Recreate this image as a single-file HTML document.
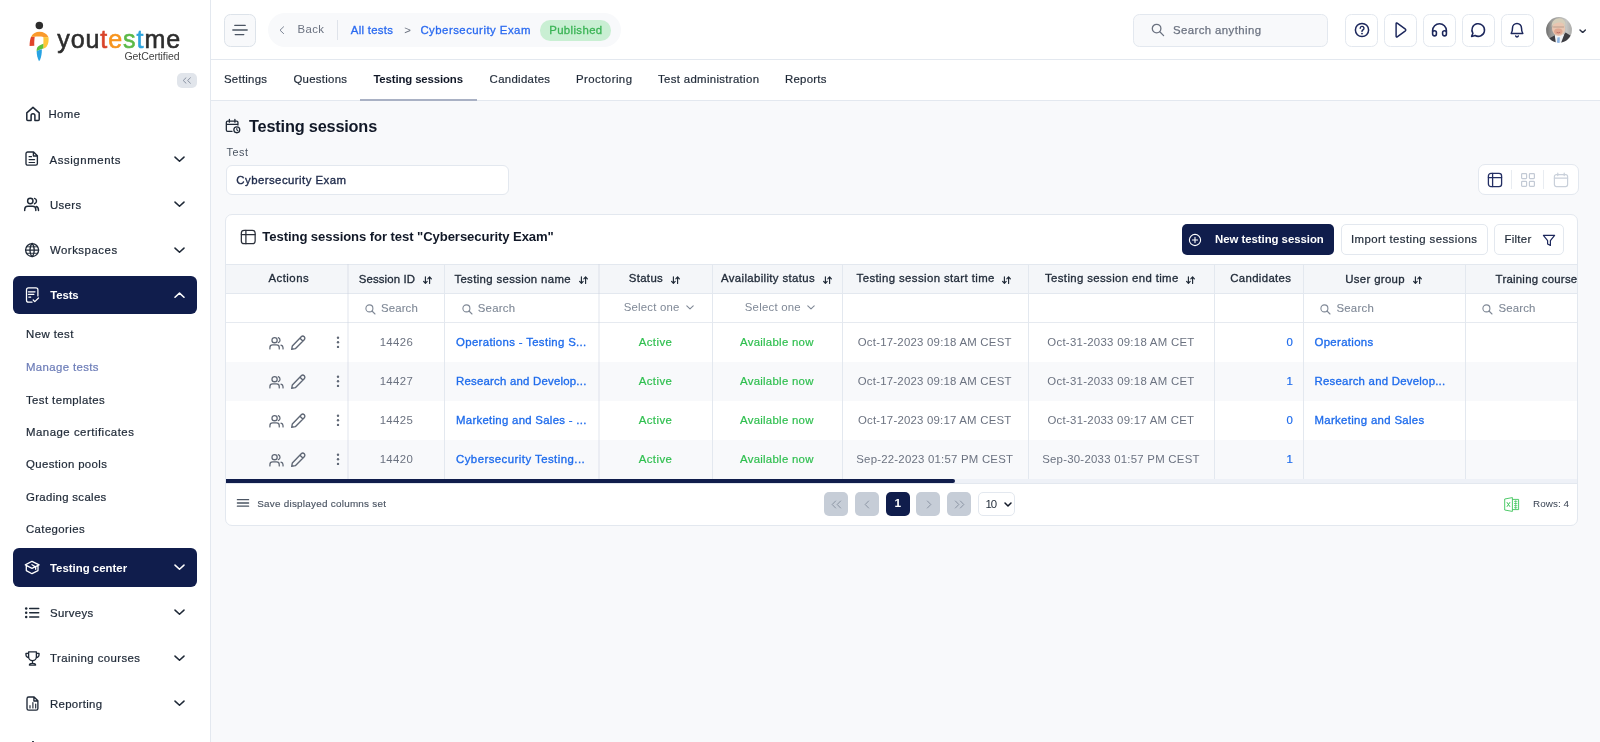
<!DOCTYPE html><html><head><meta charset="utf-8"><title>Testing sessions</title><style>
html,body{margin:0;padding:0}body{width:1600px;height:742px;overflow:hidden;position:relative;background:#f8f9fb;font-family:"Liberation Sans",sans-serif;}
.b{position:absolute;box-sizing:border-box}.t{position:absolute;white-space:nowrap;line-height:1;font-family:"Liberation Sans",sans-serif;}
</style></head><body>
<div class="b" style="left:0px;top:0px;width:211px;height:742px;background:#ffffff;border-right:1px solid #e3e8ef;"></div>
<div class="b" style="left:211px;top:0px;width:1389px;height:60px;background:#ffffff;border-bottom:1px solid #e3e8ef;"></div>
<div class="b" style="left:211px;top:60px;width:1389px;height:41px;background:#ffffff;border-bottom:1px solid #e3e8ef;"></div>
<svg class="b" style="left:26px;top:18px" width="26" height="46" viewBox="26 18 26 46">
<circle cx="39.3" cy="25.4" r="3.75" fill="#2d2d2d"/>
<path d="M31.0 36.9 L34.7 36.7 C34.3 39.5 34.2 43 34.3 45.7 L29.6 46.1 C29.6 42.5 30.0 39.6 31.0 36.9 Z" fill="#e0452b"/>
<path d="M31.0 37.0 C32.8 33.4 36 31.8 39.4 31.8 C43.6 31.8 46.9 33.7 48.5 37.3 L43.4 37.0 C41 36.4 37 36.4 34.6 36.8 Z" fill="#fa9a2c"/>
<path d="M43.3 37.0 L48.5 37.2 C48.9 40.5 48.5 44 46.7 46.4 C45.5 47.8 44 48.4 43.2 48.5 L43.3 44.0 C43.5 41 43.5 39 43.3 37.0 Z" fill="#fdc63a"/>
<path d="M43.35 43.8 L43.3 48.5 C41 49.2 38.5 50 36.7 51.3 C36.4 48.5 37.2 46.6 39.5 45.4 C41 44.7 42.2 44.3 43.35 43.8 Z" fill="#5cc03c"/>
<path d="M36.7 51.1 C38.5 50 40.4 49.5 41.9 49.2 C41.9 53 41.3 57 40.1 59.8 L39 61.2 C37.4 58 36.6 54.6 36.7 51.1 Z" fill="#27a3e3"/>
</svg>
<div class="b" style="left:177px;top:73px;width:20px;height:15px;background:#e1e5eb;border-radius:5px;"></div>
<svg class="b" style="left:181.6px;top:77.2px;" width="10" height="7" viewBox="0 0 10 7" fill="none" stroke="#8a93a3" stroke-width="1.0" stroke-linecap="round" stroke-linejoin="round"><path d="M4 0.8 L1.2 3.5 L4 6.2 M8.4 0.8 L5.6 3.5 L8.4 6.2"/></svg>
<svg class="b" style="left:25px;top:106px;" width="16" height="16" viewBox="0 0 16 16" fill="none" stroke="#1f2937" stroke-width="1.5" stroke-linecap="round" stroke-linejoin="round"><path d="M6.1 14.6 V9.6 a1.9 1.9 0 0 1 3.8 0 V14.6 H13.2 a1 1 0 0 0 1 -1 V6.9 L8 1.4 L1.8 6.9 V13.6 a1 1 0 0 0 1 1 Z"/></svg>
<svg class="b" style="left:25.3px;top:151.2px" width="13.4" height="15.2" viewBox="25.3 151.2 13.4 15.2" fill="none" stroke="#1f2937" stroke-width="1.35" stroke-linecap="round" stroke-linejoin="round"><path d="M28.0 152.2 H33.900000000000006 L37.7 156.0 V163.70000000000002 a1.7 1.7 0 0 1 -1.7 1.7 H28.0 a1.7 1.7 0 0 1 -1.7 -1.7 V153.89999999999998 a1.7 1.7 0 0 1 1.7 -1.7 Z M33.7 152.39999999999998 V156.2 H37.5"/><path d="M29.4 156.9 H31.8 M29.4 159.8 H34.9 M29.4 162.7 H34.9" stroke-width="1.2"/></svg>
<svg class="b" style="left:173.5px;top:155.5px;" width="11" height="6.4" viewBox="0 0 11 6.2" fill="none" stroke="#1f2937" stroke-width="1.5" stroke-linecap="round" stroke-linejoin="round"><path d="M1 1 L5.5 5.2 L10 1"/></svg>
<svg class="b" style="left:23px;top:196px" width="18" height="17" viewBox="23 196 18 17" fill="none" stroke="#1f2937" stroke-width="1.45" stroke-linecap="round" stroke-linejoin="round"><circle cx="30.3" cy="200.95" r="2.7"/><path d="M24.7 210.4 V209.4 a3.2 3.2 0 0 1 3.2 -3.2 H32.6 a3.2 3.2 0 0 1 3.2 3.2 V210.4 M34.5 198.4 a2.75 2.75 0 0 1 0 5.3 M36.3 206.5 C37.8 207 38.5 208.4 38.5 210.4"/></svg>
<svg class="b" style="left:173.5px;top:201px;" width="11" height="6.4" viewBox="0 0 11 6.2" fill="none" stroke="#1f2937" stroke-width="1.5" stroke-linecap="round" stroke-linejoin="round"><path d="M1 1 L5.5 5.2 L10 1"/></svg>
<svg class="b" style="left:23px;top:241px" width="18" height="18" viewBox="23 241 18 18" fill="none" stroke="#1f2937" stroke-width="1.3" stroke-linecap="round" stroke-linejoin="round"><circle cx="32.1" cy="250.05" r="6.5"/><path d="M25.6 250.05 H38.6 M32.1 243.55 C29.2 246.3 29.2 253.8 32.1 256.55 M32.1 243.55 C35 246.3 35 253.8 32.1 256.55"/><path d="M26.6 246.8 H37.6 M26.6 253.3 H37.6" stroke-width="0.9"/></svg>
<svg class="b" style="left:173.5px;top:246.5px;" width="11" height="6.4" viewBox="0 0 11 6.2" fill="none" stroke="#1f2937" stroke-width="1.5" stroke-linecap="round" stroke-linejoin="round"><path d="M1 1 L5.5 5.2 L10 1"/></svg>
<div class="b" style="left:13px;top:276px;width:184px;height:38px;background:#101d4c;border-radius:6px;"></div>
<svg class="b" style="left:24px;top:285px" width="17" height="20" viewBox="24 285 17 20" fill="none" stroke="#ffffff" stroke-width="1.25" stroke-linecap="round" stroke-linejoin="round"><path d="M37.9 295.9 V289.8 a2 2 0 0 0 -2 -2 H28.5 a2 2 0 0 0 -2 2 V300.2 a2 2 0 0 0 2 2 H32 M28.4 291.8 H35 M28.4 294.3 H33.9 M28.8 297 H30.7 M33.2 300 L34.8 301.6 L38.5 298"/></svg>
<svg class="b" style="left:173.5px;top:291.5px;" width="11" height="6.4" viewBox="0 0 11 6.2" fill="none" stroke="#ffffff" stroke-width="1.5" stroke-linecap="round" stroke-linejoin="round"><path d="M1 5.2 L5.5 1 L10 5.2"/></svg>
<div class="b" style="left:13px;top:548px;width:184px;height:39px;background:#101d4c;border-radius:6px;"></div>
<svg class="b" style="left:23px;top:559px" width="18" height="17" viewBox="23 559 18 17" fill="none" stroke="#ffffff" stroke-width="1.3" stroke-linecap="round" stroke-linejoin="round"><path d="M25.3 564.9 L32 561.3 L39.1 564.9 L32 568.3 Z M26.3 565.8 V570.6 L32 573.7 L38 570.6 V565.8 M32 564.7 L35.7 567 V569.3"/></svg>
<svg class="b" style="left:173.5px;top:564.3px;" width="11" height="6.4" viewBox="0 0 11 6.2" fill="none" stroke="#ffffff" stroke-width="1.5" stroke-linecap="round" stroke-linejoin="round"><path d="M1 1 L5.5 5.2 L10 1"/></svg>
<svg class="b" style="left:23px;top:605px" width="18" height="16" viewBox="23 605 18 16" fill="none" stroke="#1f2937" stroke-width="1.4" stroke-linecap="round" stroke-linejoin="round"><path d="M29.7 608.5 H38.7 M29.7 612.7 H38.7 M29.7 616.9 H38.7" stroke-width="1.5"/><circle cx="26.2" cy="608.5" r="1.25" fill="#1f2937" stroke="none"/><circle cx="26.2" cy="612.7" r="1.25" fill="#1f2937" stroke="none"/><circle cx="26.2" cy="616.9" r="1.25" fill="#1f2937" stroke="none"/></svg>
<svg class="b" style="left:173.5px;top:609.3px;" width="11" height="6.4" viewBox="0 0 11 6.2" fill="none" stroke="#1f2937" stroke-width="1.5" stroke-linecap="round" stroke-linejoin="round"><path d="M1 1 L5.5 5.2 L10 1"/></svg>
<svg class="b" style="left:23.9px;top:649.6px;" width="17" height="17" viewBox="0 0 17 16" fill="none" stroke="#1f2937" stroke-width="1.35" stroke-linecap="round" stroke-linejoin="round"><path d="M4.6 1.4 H12.4 V6.2 a3.9 3.9 0 0 1 -7.8 0 Z M4.6 2.8 H2 V4.4 a2.6 2.6 0 0 0 2.8 2.6 M12.4 2.8 H15 V4.4 a2.6 2.6 0 0 1 -2.8 2.6 M8.5 10.2 V12.4 M5.4 14.6 C5.4 12.2 11.6 12.2 11.6 14.6 Z"/></svg>
<svg class="b" style="left:173.5px;top:654.6px;" width="11" height="6.4" viewBox="0 0 11 6.2" fill="none" stroke="#1f2937" stroke-width="1.5" stroke-linecap="round" stroke-linejoin="round"><path d="M1 1 L5.5 5.2 L10 1"/></svg>
<svg class="b" style="left:25.7px;top:695.7px" width="12.9" height="15.2" viewBox="25.7 695.7 12.9 15.2" fill="none" stroke="#1f2937" stroke-width="1.35" stroke-linecap="round" stroke-linejoin="round"><path d="M28.4 696.7 H33.800000000000004 L37.6 700.5 V708.1999999999999 a1.7 1.7 0 0 1 -1.7 1.7 H28.4 a1.7 1.7 0 0 1 -1.7 -1.7 V698.4000000000001 a1.7 1.7 0 0 1 1.7 -1.7 Z M33.6 696.9000000000001 V700.7 H37.4"/><path d="M29.7 707.6 V705.4 M32.6 707.6 V702.3 M35.4 707.6 V703.7" stroke-width="1.15"/></svg>
<svg class="b" style="left:173.5px;top:699.8px;" width="11" height="6.4" viewBox="0 0 11 6.2" fill="none" stroke="#1f2937" stroke-width="1.5" stroke-linecap="round" stroke-linejoin="round"><path d="M1 1 L5.5 5.2 L10 1"/></svg>
<div class="b" style="left:32px;top:740.6px;width:2.2px;height:1.4px;background:#1f2937;border-radius:1px;"></div>
<div class="b" style="left:223.8px;top:14px;width:32.6px;height:32.6px;background:#f8f9fb;border:1px solid #dde3ea;border-radius:6.5px;"></div>
<svg class="b" style="left:232px;top:22px;" width="16" height="16" viewBox="0 0 16 16" fill="none" stroke="#4b5563" stroke-width="1.3" stroke-linecap="round" stroke-linejoin="round"><path d="M2.8 3.4 H13.2 M0.8 8 H15.2 M3.2 12.6 H11.8"/></svg>
<div class="b" style="left:268px;top:13px;width:353px;height:34px;background:#f8f9fb;border-radius:17px;"></div>
<svg class="b" style="left:279px;top:26px;" width="6" height="8.4" viewBox="0 0 6 8.4" fill="none" stroke="#7b8494" stroke-width="1.0" stroke-linecap="round" stroke-linejoin="round"><path d="M4.6 0.8 L1 4.2 L4.6 7.6"/></svg>
<div class="b" style="left:337px;top:20px;width:1px;height:20px;background:#dfe3ea;"></div>
<div class="b" style="left:540px;top:20px;width:71px;height:20.5px;background:#c9efd3;border-radius:10.3px;"></div>
<div class="b" style="left:1133px;top:14px;width:195px;height:32.6px;background:#f8f9fb;border:1px solid #e3e8ef;border-radius:6.5px;"></div>
<svg class="b" style="left:1151px;top:22.7px;" width="14" height="14" viewBox="0 0 14 14" fill="none" stroke="#6b7280" stroke-width="1.3" stroke-linecap="round" stroke-linejoin="round"><circle cx="5.6" cy="5.6" r="4.3"/><path d="M8.8 8.8 L12.6 12.6"/></svg>
<div class="b" style="left:1345.3px;top:14px;width:32.6px;height:32.6px;background:#ffffff;border:1px solid #e3e8ef;border-radius:6.5px;"></div>
<div class="b" style="left:1384.3px;top:14px;width:32.6px;height:32.6px;background:#ffffff;border:1px solid #e3e8ef;border-radius:6.5px;"></div>
<div class="b" style="left:1423.3px;top:14px;width:32.6px;height:32.6px;background:#ffffff;border:1px solid #e3e8ef;border-radius:6.5px;"></div>
<div class="b" style="left:1462.3px;top:14px;width:32.6px;height:32.6px;background:#ffffff;border:1px solid #e3e8ef;border-radius:6.5px;"></div>
<div class="b" style="left:1501.3px;top:14px;width:32.6px;height:32.6px;background:#ffffff;border:1px solid #e3e8ef;border-radius:6.5px;"></div>
<svg class="b" style="left:1353.9px;top:22px;" width="16" height="16" viewBox="0 0 16 16" fill="none" stroke="#1c275c" stroke-width="1.5" stroke-linecap="round" stroke-linejoin="round"><circle cx="8" cy="8" r="6.6"/><path d="M6.2 6.2 a1.9 1.9 0 1 1 2.7 1.8 c-0.6 0.3 -0.9 0.7 -0.9 1.4" stroke-width="1.4"/><circle cx="8" cy="11.6" r="0.9" fill="#1c275c" stroke="none"/></svg>
<svg class="b" style="left:1392.2px;top:22px;" width="16" height="16" viewBox="0 0 16 16" fill="none" stroke="#1c275c" stroke-width="1.45" stroke-linecap="round" stroke-linejoin="round"><path d="M4.1 1.7 C4.1 1 4.7 0.8 5.2 1.1 L13.4 7.2 C13.9 7.6 13.9 8.4 13.4 8.8 L5.2 14.9 C4.7 15.2 4.1 15 4.1 14.3 Z"/></svg>
<svg class="b" style="left:1431px;top:21.8px;" width="17" height="16" viewBox="0 0 17 16" fill="none" stroke="#1c275c" stroke-width="1.6" stroke-linecap="round" stroke-linejoin="round"><path d="M1.6 11.4 V8.6 a6.9 6.9 0 0 1 13.8 0 V11.4 M1.6 12 a1.9 1.9 0 0 0 3.8 0 V10.6 a1.9 1.9 0 0 0 -3.8 0 Z M11.6 12 a1.9 1.9 0 0 0 3.8 0 V10.6 a1.9 1.9 0 0 0 -3.8 0 Z"/></svg>
<svg class="b" style="left:1470.3px;top:22px;" width="16" height="16" viewBox="0 0 16 16" fill="none" stroke="#1c275c" stroke-width="1.5" stroke-linecap="round" stroke-linejoin="round"><path d="M2.9 11.4 A6.3 6.3 0 1 1 5.1 13.5 L1.6 14.4 Z"/></svg>
<svg class="b" style="left:1509.4px;top:21px;" width="16" height="18" viewBox="0 0 16 18" fill="none" stroke="#1c275c" stroke-width="1.5" stroke-linecap="round" stroke-linejoin="round"><path d="M2.2 12.4 H13.8 C12.5 10.8 12.5 9.4 12.5 7 a4.5 4.5 0 0 0 -9 0 C3.5 9.4 3.5 10.8 2.2 12.4 Z M6.7 15 a1.4 1.4 0 0 0 2.6 0"/></svg>
<svg class="b" style="left:1546.4px;top:17.2px" width="26" height="26" viewBox="0 0 26 26">
<defs><clipPath id="av"><circle cx="13" cy="13" r="12.9"/></clipPath>
<linearGradient id="avbg" x1="0" y1="0" x2="1" y2="0"><stop offset="0" stop-color="#5e5e5e"/><stop offset="0.25" stop-color="#9a9a98"/><stop offset="0.75" stop-color="#c6c6c4"/><stop offset="1" stop-color="#a2a2a0"/></linearGradient>
<filter id="avbl" x="-10%" y="-10%" width="120%" height="120%"><feGaussianBlur stdDeviation="0.6"/></filter></defs>
<g clip-path="url(#av)"><g filter="url(#avbl)">
<rect x="-2" y="-2" width="30" height="30" fill="url(#avbg)"/>
<path d="M1 22.5 L9 18.2 L13 25 L17.5 18.5 L19.6 15.4 L26 19.5 L26 28 L1 28 Z" fill="#3c3d43"/>
<path d="M8.8 18.4 L12 16.6 L16.4 17.2 L18.2 17.6 L14.6 27 L10 27 Z" fill="#f1f3f6"/>
<path d="M11.4 20.4 L13.8 20.2 L13.6 27 L10.8 27 Z" fill="#8db4e2"/>
<ellipse cx="12.6" cy="11.4" rx="6.6" ry="7.6" fill="#e9c6b1"/>
<ellipse cx="12.3" cy="14.6" rx="4.2" ry="3" fill="#e0a791"/>
<path d="M5.8 10 C5 3.6 9.8 0.9 13.8 1.2 C18.2 1.5 20.4 5.4 19.2 10 C18.4 6.4 16 5.2 12.8 5.6 C9.6 6 7 7.2 5.8 10 Z" fill="#d6cfbb"/>
<path d="M7.2 10 H18" stroke="#9a8476" stroke-width="0.6" fill="none"/>
<path d="M10.6 15.3 Q12.4 16.3 14.2 15.3" stroke="#b5605a" stroke-width="0.7" fill="none"/>
</g></g></svg>
<svg class="b" style="left:1579.1px;top:28.5px;" width="7.4" height="4.8" viewBox="0 0 7.4 4.8" fill="none" stroke="#2b3245" stroke-width="1.4" stroke-linecap="round" stroke-linejoin="round"><path d="M1 1 L3.7 3.6 L6.4 1"/></svg>
<div class="b" style="left:360px;top:99.3px;width:116.6px;height:1.7px;background:#a9b1c4;"></div>
<svg class="b" style="left:225.2px;top:117.6px;" width="16.2" height="16.2" viewBox="0 0 17 17" fill="none" stroke="#1f2937" stroke-width="1.35" stroke-linecap="round" stroke-linejoin="round"><path d="M13.6 7.4 V4.6 a1.4 1.4 0 0 0 -1.4 -1.4 H2.8 a1.4 1.4 0 0 0 -1.4 1.4 V12.6 a1.4 1.4 0 0 0 1.4 1.4 H7.4 M1.4 6.6 H13.6 M4.6 1.4 V4.4 M10.4 1.4 V4.4"/><circle cx="12.4" cy="12.4" r="3.1"/><path d="M12.4 10.9 V12.5 L13.4 13.1" stroke-width="1.1"/></svg>
<div class="b" style="left:226px;top:165px;width:283px;height:30px;background:#ffffff;border:1px solid #e3e8ef;border-radius:6px;"></div>
<div class="b" style="left:1478px;top:164px;width:101px;height:31px;background:#ffffff;border:1px solid #e3e8ef;border-radius:7px;"></div>
<svg class="b" style="left:1487.25px;top:171.9px;" width="16" height="16" viewBox="0 0 16 16" fill="none" stroke="#232e63" stroke-width="1.3" stroke-linecap="round" stroke-linejoin="round"><rect x="1.4" y="1.4" width="13.2" height="13.2" rx="2.6"/><path d="M1.4 5.6 H14.6 M5.6 1.4 V14.6"/></svg>
<div class="b" style="left:1510.8px;top:169.5px;width:1px;height:19.5px;background:#e8ecf1;"></div>
<svg class="b" style="left:1520.2px;top:172.0px;" width="16" height="16" viewBox="0 0 16 16" fill="none" stroke="#c3cad5" stroke-width="1.2" stroke-linecap="round" stroke-linejoin="round"><rect x="1.6" y="1.6" width="5" height="5" rx="0.8"/><rect x="9.4" y="1.6" width="5" height="5" rx="0.8"/><rect x="1.6" y="9.4" width="5" height="5" rx="0.8"/><rect x="9.4" y="9.4" width="5" height="5" rx="0.8"/></svg>
<div class="b" style="left:1543px;top:169.5px;width:1px;height:19.5px;background:#e8ecf1;"></div>
<svg class="b" style="left:1553.2px;top:171.7px;" width="16" height="16" viewBox="0 0 16 16" fill="none" stroke="#c9d0da" stroke-width="1.2" stroke-linecap="round" stroke-linejoin="round"><rect x="1.4" y="2.6" width="13.2" height="12" rx="2"/><path d="M1.4 6.2 H14.6 M4.8 1 V3.6 M11.2 1 V3.6"/></svg>
<div class="b" style="left:225px;top:214px;width:1353px;height:312px;background:#ffffff;border:1px solid #e3e8ef;border-radius:7px;"></div>
<svg class="b" style="left:239.6px;top:229px;" width="16.6" height="16" viewBox="0 0 16.6 16" fill="none" stroke="#2a2f3a" stroke-width="1.25" stroke-linecap="round" stroke-linejoin="round"><rect x="1.35" y="1.3" width="13.8" height="13.4" rx="2.8"/><path d="M1.35 5.5 H15.15 M5.9 1.3 V14.7"/></svg>
<div class="b" style="left:1182px;top:224px;width:152px;height:31px;background:#101d4c;border-radius:5px;"></div>
<svg class="b" style="left:1188px;top:232.5px;" width="14" height="14" viewBox="0 0 14 14" fill="none" stroke="#ffffff" stroke-width="1.1" stroke-linecap="round" stroke-linejoin="round"><circle cx="7" cy="7" r="5.6"/><path d="M7 4.4 V9.6 M4.4 7 H9.6"/></svg>
<div class="b" style="left:1340.5px;top:224px;width:147px;height:31px;background:#ffffff;border:1px solid #e3e8ef;border-radius:5px;"></div>
<div class="b" style="left:1494px;top:224px;width:70px;height:31px;background:#ffffff;border:1px solid #e3e8ef;border-radius:5px;"></div>
<svg class="b" style="left:1542px;top:233.5px;" width="14" height="13" viewBox="0 0 14 13" fill="none" stroke="#1c275c" stroke-width="1.2" stroke-linecap="round" stroke-linejoin="round"><path d="M1.4 1.4 H12.6 L8.4 6.6 V11.4 L5.6 10 V6.6 Z"/></svg>
<div class="b" style="left:226px;top:264px;width:1351px;height:30px;background:#f4f6f9;border-top:1px solid #e3e8ef;border-bottom:1px solid #e3e8ef;"></div>
<div class="b" style="left:226px;top:294px;width:1351px;height:29px;background:#ffffff;border-bottom:1px solid #e6eaf0;"></div>
<div class="b" style="left:226px;top:323px;width:1351px;height:39px;background:#ffffff;"></div>
<div class="b" style="left:226px;top:362px;width:1351px;height:39px;background:#f8f9fb;"></div>
<div class="b" style="left:226px;top:401px;width:1351px;height:39px;background:#ffffff;"></div>
<div class="b" style="left:226px;top:440px;width:1351px;height:39px;background:#f8f9fb;"></div>
<div class="b" style="left:347px;top:264px;width:2px;height:215px;background:rgba(200,210,224,0.28)"></div>
<div class="b" style="left:444px;top:264px;width:1px;height:215px;background:#e3e8ef;"></div>
<div class="b" style="left:598px;top:264px;width:2px;height:215px;background:rgba(200,210,224,0.28)"></div>
<div class="b" style="left:712px;top:264px;width:1px;height:215px;background:#e3e8ef;"></div>
<div class="b" style="left:842px;top:264px;width:1px;height:215px;background:#e3e8ef;"></div>
<div class="b" style="left:1028px;top:264px;width:1px;height:215px;background:#e3e8ef;"></div>
<div class="b" style="left:1214px;top:264px;width:1px;height:215px;background:#e3e8ef;"></div>
<div class="b" style="left:1303px;top:264px;width:1px;height:215px;background:#e3e8ef;"></div>
<div class="b" style="left:1465px;top:264px;width:1px;height:215px;background:#e3e8ef;"></div>
<div class="b" style="left:226px;top:479px;width:1351px;height:5px;background:#eef1f7;border-bottom:1px solid #e3e8ef;"></div>
<div class="b" style="left:226px;top:479px;width:728.5px;height:4.2px;background:#101d4c;border-radius:0 2.2px 2.2px 0;"></div>
<svg class="b" style="left:423px;top:275.8px;" width="9" height="8.4" viewBox="0 0 9 8.4" fill="none" stroke="#1f2937" stroke-width="1.15" stroke-linecap="round" stroke-linejoin="round"><path d="M2.4 0.8 V7.2 M0.6 5.4 L2.4 7.4 L4.2 5.4 M6.6 7.4 V1 M4.8 2.8 L6.6 0.8 L8.4 2.8"/></svg>
<svg class="b" style="left:578.7px;top:275.8px;" width="9" height="8.4" viewBox="0 0 9 8.4" fill="none" stroke="#1f2937" stroke-width="1.15" stroke-linecap="round" stroke-linejoin="round"><path d="M2.4 0.8 V7.2 M0.6 5.4 L2.4 7.4 L4.2 5.4 M6.6 7.4 V1 M4.8 2.8 L6.6 0.8 L8.4 2.8"/></svg>
<svg class="b" style="left:670.8px;top:275.5px;" width="9" height="8.4" viewBox="0 0 9 8.4" fill="none" stroke="#1f2937" stroke-width="1.15" stroke-linecap="round" stroke-linejoin="round"><path d="M2.4 0.8 V7.2 M0.6 5.4 L2.4 7.4 L4.2 5.4 M6.6 7.4 V1 M4.8 2.8 L6.6 0.8 L8.4 2.8"/></svg>
<svg class="b" style="left:823.2px;top:275.5px;" width="9" height="8.4" viewBox="0 0 9 8.4" fill="none" stroke="#1f2937" stroke-width="1.15" stroke-linecap="round" stroke-linejoin="round"><path d="M2.4 0.8 V7.2 M0.6 5.4 L2.4 7.4 L4.2 5.4 M6.6 7.4 V1 M4.8 2.8 L6.6 0.8 L8.4 2.8"/></svg>
<svg class="b" style="left:1002px;top:275.5px;" width="9" height="8.4" viewBox="0 0 9 8.4" fill="none" stroke="#1f2937" stroke-width="1.15" stroke-linecap="round" stroke-linejoin="round"><path d="M2.4 0.8 V7.2 M0.6 5.4 L2.4 7.4 L4.2 5.4 M6.6 7.4 V1 M4.8 2.8 L6.6 0.8 L8.4 2.8"/></svg>
<svg class="b" style="left:1186.4px;top:275.5px;" width="9" height="8.4" viewBox="0 0 9 8.4" fill="none" stroke="#1f2937" stroke-width="1.15" stroke-linecap="round" stroke-linejoin="round"><path d="M2.4 0.8 V7.2 M0.6 5.4 L2.4 7.4 L4.2 5.4 M6.6 7.4 V1 M4.8 2.8 L6.6 0.8 L8.4 2.8"/></svg>
<svg class="b" style="left:1412.8px;top:276.2px;" width="9" height="8.4" viewBox="0 0 9 8.4" fill="none" stroke="#1f2937" stroke-width="1.15" stroke-linecap="round" stroke-linejoin="round"><path d="M2.4 0.8 V7.2 M0.6 5.4 L2.4 7.4 L4.2 5.4 M6.6 7.4 V1 M4.8 2.8 L6.6 0.8 L8.4 2.8"/></svg>
<svg class="b" style="left:364.5px;top:304.2px;" width="11" height="11" viewBox="0 0 11 11" fill="none" stroke="#7f8896" stroke-width="1.1" stroke-linecap="round" stroke-linejoin="round"><circle cx="4.4" cy="4.4" r="3.5"/><path d="M7 7 L10 10"/></svg>
<svg class="b" style="left:461.8px;top:304.2px;" width="11" height="11" viewBox="0 0 11 11" fill="none" stroke="#7f8896" stroke-width="1.1" stroke-linecap="round" stroke-linejoin="round"><circle cx="4.4" cy="4.4" r="3.5"/><path d="M7 7 L10 10"/></svg>
<svg class="b" style="left:685.5px;top:305.4px;" width="8" height="5" viewBox="0 0 8 5" fill="none" stroke="#7f8896" stroke-width="1.1" stroke-linecap="round" stroke-linejoin="round"><path d="M0.8 0.8 L4 3.8 L7.2 0.8"/></svg>
<svg class="b" style="left:807px;top:305.4px;" width="8" height="5" viewBox="0 0 8 5" fill="none" stroke="#7f8896" stroke-width="1.1" stroke-linecap="round" stroke-linejoin="round"><path d="M0.8 0.8 L4 3.8 L7.2 0.8"/></svg>
<svg class="b" style="left:1320px;top:304.29999999999995px;" width="11" height="11" viewBox="0 0 11 11" fill="none" stroke="#7f8896" stroke-width="1.1" stroke-linecap="round" stroke-linejoin="round"><circle cx="4.4" cy="4.4" r="3.5"/><path d="M7 7 L10 10"/></svg>
<svg class="b" style="left:1482.3px;top:304.29999999999995px;" width="11" height="11" viewBox="0 0 11 11" fill="none" stroke="#7f8896" stroke-width="1.1" stroke-linecap="round" stroke-linejoin="round"><circle cx="4.4" cy="4.4" r="3.5"/><path d="M7 7 L10 10"/></svg>
<svg class="b" style="left:268.6px;top:336.09999999999997px;" width="15.3" height="14.4" viewBox="0 0 17 16" fill="none" stroke="#5f6775" stroke-width="1.4" stroke-linecap="round" stroke-linejoin="round"><circle cx="6.2" cy="4.6" r="2.9"/><path d="M1 14.4 V13 a3 3 0 0 1 3 -3 H8.4 a3 3 0 0 1 3 3 V14.4 M10.4 1.9 a2.9 2.9 0 0 1 0 5.4 M15.6 14.4 V13 a3 3 0 0 0 -2.3 -2.9"/></svg>
<svg class="b" style="left:290.0px;top:334.3px;" width="17" height="17" viewBox="0 0 16 16" fill="none" stroke="#5f6775" stroke-width="1.3" stroke-linecap="round" stroke-linejoin="round"><path d="M2.2 11.2 L10.6 2.6 a1.9 1.9 0 0 1 2.8 2.8 L5 13.8 L1.6 14.4 Z M9.4 3.9 L12.1 6.6"/></svg>
<svg class="b" style="left:336.2px;top:335.8px" width="4" height="13" viewBox="0 0 4 13"><circle cx="2" cy="1.7" r="1.2" fill="#5f6775"/><circle cx="2" cy="6.3" r="1.2" fill="#5f6775"/><circle cx="2" cy="10.9" r="1.2" fill="#5f6775"/></svg>
<svg class="b" style="left:268.6px;top:375.09999999999997px;" width="15.3" height="14.4" viewBox="0 0 17 16" fill="none" stroke="#5f6775" stroke-width="1.4" stroke-linecap="round" stroke-linejoin="round"><circle cx="6.2" cy="4.6" r="2.9"/><path d="M1 14.4 V13 a3 3 0 0 1 3 -3 H8.4 a3 3 0 0 1 3 3 V14.4 M10.4 1.9 a2.9 2.9 0 0 1 0 5.4 M15.6 14.4 V13 a3 3 0 0 0 -2.3 -2.9"/></svg>
<svg class="b" style="left:290.0px;top:373.3px;" width="17" height="17" viewBox="0 0 16 16" fill="none" stroke="#5f6775" stroke-width="1.3" stroke-linecap="round" stroke-linejoin="round"><path d="M2.2 11.2 L10.6 2.6 a1.9 1.9 0 0 1 2.8 2.8 L5 13.8 L1.6 14.4 Z M9.4 3.9 L12.1 6.6"/></svg>
<svg class="b" style="left:336.2px;top:374.8px" width="4" height="13" viewBox="0 0 4 13"><circle cx="2" cy="1.7" r="1.2" fill="#5f6775"/><circle cx="2" cy="6.3" r="1.2" fill="#5f6775"/><circle cx="2" cy="10.9" r="1.2" fill="#5f6775"/></svg>
<svg class="b" style="left:268.6px;top:414.2px;" width="15.3" height="14.4" viewBox="0 0 17 16" fill="none" stroke="#5f6775" stroke-width="1.4" stroke-linecap="round" stroke-linejoin="round"><circle cx="6.2" cy="4.6" r="2.9"/><path d="M1 14.4 V13 a3 3 0 0 1 3 -3 H8.4 a3 3 0 0 1 3 3 V14.4 M10.4 1.9 a2.9 2.9 0 0 1 0 5.4 M15.6 14.4 V13 a3 3 0 0 0 -2.3 -2.9"/></svg>
<svg class="b" style="left:290.0px;top:412.40000000000003px;" width="17" height="17" viewBox="0 0 16 16" fill="none" stroke="#5f6775" stroke-width="1.3" stroke-linecap="round" stroke-linejoin="round"><path d="M2.2 11.2 L10.6 2.6 a1.9 1.9 0 0 1 2.8 2.8 L5 13.8 L1.6 14.4 Z M9.4 3.9 L12.1 6.6"/></svg>
<svg class="b" style="left:336.2px;top:413.9px" width="4" height="13" viewBox="0 0 4 13"><circle cx="2" cy="1.7" r="1.2" fill="#5f6775"/><circle cx="2" cy="6.3" r="1.2" fill="#5f6775"/><circle cx="2" cy="10.9" r="1.2" fill="#5f6775"/></svg>
<svg class="b" style="left:268.6px;top:453.0px;" width="15.3" height="14.4" viewBox="0 0 17 16" fill="none" stroke="#5f6775" stroke-width="1.4" stroke-linecap="round" stroke-linejoin="round"><circle cx="6.2" cy="4.6" r="2.9"/><path d="M1 14.4 V13 a3 3 0 0 1 3 -3 H8.4 a3 3 0 0 1 3 3 V14.4 M10.4 1.9 a2.9 2.9 0 0 1 0 5.4 M15.6 14.4 V13 a3 3 0 0 0 -2.3 -2.9"/></svg>
<svg class="b" style="left:290.0px;top:451.20000000000005px;" width="17" height="17" viewBox="0 0 16 16" fill="none" stroke="#5f6775" stroke-width="1.3" stroke-linecap="round" stroke-linejoin="round"><path d="M2.2 11.2 L10.6 2.6 a1.9 1.9 0 0 1 2.8 2.8 L5 13.8 L1.6 14.4 Z M9.4 3.9 L12.1 6.6"/></svg>
<svg class="b" style="left:336.2px;top:452.7px" width="4" height="13" viewBox="0 0 4 13"><circle cx="2" cy="1.7" r="1.2" fill="#5f6775"/><circle cx="2" cy="6.3" r="1.2" fill="#5f6775"/><circle cx="2" cy="10.9" r="1.2" fill="#5f6775"/></svg>
<svg class="b" style="left:235.6px;top:498.3px;" width="14" height="10" viewBox="0 0 14 10" fill="none" stroke="#4b5563" stroke-width="1.3" stroke-linecap="round" stroke-linejoin="round"><path d="M1.4 1.7 H12.6 M1.4 5 H12.6 M1.4 8.2 H12.6"/></svg>
<div class="b" style="left:824.4px;top:492px;width:24px;height:24px;background:#c6cdd7;border-radius:5px;"></div>
<div class="b" style="left:855px;top:492px;width:24px;height:24px;background:#c6cdd7;border-radius:5px;"></div>
<div class="b" style="left:916.3px;top:492px;width:24px;height:24px;background:#c6cdd7;border-radius:5px;"></div>
<div class="b" style="left:947.4px;top:492px;width:24px;height:24px;background:#c6cdd7;border-radius:5px;"></div>
<div class="b" style="left:886px;top:492px;width:23.6px;height:24px;background:#101d4c;border-radius:5px;"></div>
<svg class="b" style="left:830.9px;top:499.5px;" width="11" height="9" viewBox="0 0 11 9" fill="none" stroke="#8b94a3" stroke-width="1.0" stroke-linecap="round" stroke-linejoin="round"><path d="M4.6 1 L1.2 4.5 L4.6 8 M9.6 1 L6.2 4.5 L9.6 8"/></svg>
<svg class="b" style="left:864px;top:499.5px;" width="6" height="9" viewBox="0 0 6 9" fill="none" stroke="#8b94a3" stroke-width="1.0" stroke-linecap="round" stroke-linejoin="round"><path d="M4.6 1 L1.2 4.5 L4.6 8"/></svg>
<svg class="b" style="left:925.5px;top:499.5px;" width="6" height="9" viewBox="0 0 6 9" fill="none" stroke="#8b94a3" stroke-width="1.0" stroke-linecap="round" stroke-linejoin="round"><path d="M1.4 1 L4.8 4.5 L1.4 8"/></svg>
<svg class="b" style="left:953.9px;top:499.5px;" width="11" height="9" viewBox="0 0 11 9" fill="none" stroke="#8b94a3" stroke-width="1.0" stroke-linecap="round" stroke-linejoin="round"><path d="M1.4 1 L4.8 4.5 L1.4 8 M6.4 1 L9.8 4.5 L6.4 8"/></svg>
<div class="b" style="left:978px;top:492px;width:37px;height:24px;background:#ffffff;border:1px solid #e3e8ef;border-radius:5px;"></div>
<svg class="b" style="left:1004px;top:501.6px;" width="8" height="5.4" viewBox="0 0 8 5.4" fill="none" stroke="#111827" stroke-width="1.5" stroke-linecap="round" stroke-linejoin="round"><path d="M1 1 L4 4 L7 1"/></svg>
<svg class="b" style="left:1504px;top:496.5px" width="16" height="15" viewBox="0 0 16 15" fill="none" stroke="#3dc45a" stroke-width="0.9" stroke-linejoin="round">
<path d="M0.7 2 L8.4 0.6 V14.4 L0.7 13 Z"/><path d="M8.4 2.4 H14.6 V12.6 H8.4"/><path d="M2.9 5.2 L6 9.8 M6 5.2 L2.9 9.8" stroke-width="1"/><path d="M10 4.4 H13.4 M10 6.5 H13.4 M10 8.6 H13.4 M10 10.7 H13.4 M11.7 3.2 V12" stroke-width="0.7"/></svg>
<div class="b" style="left:0;top:0;width:1600px;height:742px;will-change:transform">
<span class="t" style="left:57.20px;top:27.04px;font-size:25.1px;color:#2d2d2d;letter-spacing:0.898px;-webkit-text-stroke-width:0.55px;">you<span style="color:#d9432a">t</span><span style="color:#f7941d">e</span><span style="color:#5bb947">s</span><span style="color:#2ca3dd">t</span>me</span>
<span class="t" style="left:124.50px;top:51.37px;font-size:10.5px;color:#444444;letter-spacing:-0.094px;">GetCertified</span>
<span class="t" style="left:48.50px;top:108.73px;font-size:11.4px;color:#1f2937;letter-spacing:0.370px;-webkit-text-stroke-width:0.22px;">Home</span>
<span class="t" style="left:49.50px;top:154.83px;font-size:11.4px;color:#1f2937;letter-spacing:0.578px;-webkit-text-stroke-width:0.22px;">Assignments</span>
<span class="t" style="left:49.90px;top:200.43px;font-size:11.4px;color:#1f2937;letter-spacing:0.388px;-webkit-text-stroke-width:0.22px;">Users</span>
<span class="t" style="left:49.90px;top:245.43px;font-size:11.4px;color:#1f2937;letter-spacing:0.526px;-webkit-text-stroke-width:0.22px;">Workspaces</span>
<span class="t" style="left:50.20px;top:290.43px;font-size:11.4px;color:#ffffff;font-weight:bold;letter-spacing:-0.105px;">Tests</span>
<span class="t" style="left:26.00px;top:328.63px;font-size:11.4px;color:#1f2937;letter-spacing:0.441px;-webkit-text-stroke-width:0.22px;">New test</span>
<span class="t" style="left:26.00px;top:362.03px;font-size:11.4px;color:#6d7db8;letter-spacing:0.374px;-webkit-text-stroke-width:0.22px;">Manage tests</span>
<span class="t" style="left:26.00px;top:394.93px;font-size:11.4px;color:#1f2937;letter-spacing:0.405px;-webkit-text-stroke-width:0.22px;">Test templates</span>
<span class="t" style="left:26.00px;top:427.23px;font-size:11.4px;color:#1f2937;letter-spacing:0.507px;-webkit-text-stroke-width:0.22px;">Manage certificates</span>
<span class="t" style="left:26.00px;top:458.73px;font-size:11.4px;color:#1f2937;letter-spacing:0.377px;-webkit-text-stroke-width:0.22px;">Question pools</span>
<span class="t" style="left:26.00px;top:492.33px;font-size:11.4px;color:#1f2937;letter-spacing:0.332px;-webkit-text-stroke-width:0.22px;">Grading scales</span>
<span class="t" style="left:26.00px;top:524.23px;font-size:11.4px;color:#1f2937;letter-spacing:0.390px;-webkit-text-stroke-width:0.22px;">Categories</span>
<span class="t" style="left:50.00px;top:563.03px;font-size:11.4px;color:#ffffff;font-weight:bold;letter-spacing:0.006px;">Testing center</span>
<span class="t" style="left:50.00px;top:608.23px;font-size:11.4px;color:#1f2937;letter-spacing:0.324px;-webkit-text-stroke-width:0.22px;">Surveys</span>
<span class="t" style="left:50.00px;top:653.03px;font-size:11.4px;color:#1f2937;letter-spacing:0.415px;-webkit-text-stroke-width:0.22px;">Training courses</span>
<span class="t" style="left:50.00px;top:698.73px;font-size:11.4px;color:#1f2937;letter-spacing:0.326px;-webkit-text-stroke-width:0.22px;">Reporting</span>
<span class="t" style="left:297.40px;top:23.73px;font-size:11.4px;color:#6b7280;letter-spacing:0.424px;">Back</span>
<span class="t" style="left:350.80px;top:25.13px;font-size:11.4px;color:#2a6af0;letter-spacing:0.289px;-webkit-text-stroke-width:0.3px;">All tests</span>
<span class="t" style="left:404.30px;top:24.73px;font-size:11.4px;color:#6b7280;">&gt;</span>
<span class="t" style="left:420.40px;top:25.13px;font-size:11.4px;color:#2a6af0;letter-spacing:0.475px;-webkit-text-stroke-width:0.3px;">Cybersecurity Exam</span>
<span class="t" style="left:549.20px;top:25.13px;font-size:11.4px;color:#3ab355;letter-spacing:0.371px;-webkit-text-stroke-width:0.3px;">Published</span>
<span class="t" style="left:1173.00px;top:25.33px;font-size:11.4px;color:#6b7280;letter-spacing:0.405px;-webkit-text-stroke-width:0.25px;">Search anything</span>
<span class="t" style="left:224.00px;top:74.13px;font-size:11.4px;color:#1f2937;letter-spacing:0.261px;-webkit-text-stroke-width:0.2px;">Settings</span>
<span class="t" style="left:293.40px;top:74.13px;font-size:11.4px;color:#1f2937;letter-spacing:0.288px;-webkit-text-stroke-width:0.2px;">Questions</span>
<span class="t" style="left:373.40px;top:74.13px;font-size:11.4px;color:#111827;font-weight:bold;letter-spacing:-0.132px;">Testing sessions</span>
<span class="t" style="left:489.60px;top:74.13px;font-size:11.4px;color:#1f2937;letter-spacing:0.307px;-webkit-text-stroke-width:0.2px;">Candidates</span>
<span class="t" style="left:576.00px;top:74.13px;font-size:11.4px;color:#1f2937;letter-spacing:0.453px;-webkit-text-stroke-width:0.2px;">Proctoring</span>
<span class="t" style="left:658.00px;top:74.13px;font-size:11.4px;color:#1f2937;letter-spacing:0.335px;-webkit-text-stroke-width:0.2px;">Test administration</span>
<span class="t" style="left:785.00px;top:74.13px;font-size:11.4px;color:#1f2937;letter-spacing:0.268px;-webkit-text-stroke-width:0.2px;">Reports</span>
<span class="t" style="left:249.00px;top:117.64px;font-size:16.3px;color:#111827;font-weight:bold;letter-spacing:-0.180px;">Testing sessions</span>
<span class="t" style="left:226.50px;top:146.72px;font-size:10.8px;color:#4b5563;letter-spacing:0.596px;">Test</span>
<span class="t" style="left:236.30px;top:174.93px;font-size:11.4px;color:#1e2a4a;letter-spacing:0.458px;-webkit-text-stroke-width:0.35px;">Cybersecurity Exam</span>
<span class="t" style="left:262.30px;top:230.10px;font-size:13.1px;color:#111827;font-weight:bold;letter-spacing:-0.083px;">Testing sessions for test "Cybersecurity Exam"</span>
<span class="t" style="left:1215.00px;top:234.03px;font-size:11.4px;color:#ffffff;font-weight:bold;letter-spacing:-0.040px;">New testing session</span>
<span class="t" style="left:1351.00px;top:234.23px;font-size:11.4px;color:#1f2937;letter-spacing:0.427px;-webkit-text-stroke-width:0.2px;">Import testing sessions</span>
<span class="t" style="left:1504.40px;top:234.03px;font-size:11.4px;color:#1f2937;letter-spacing:0.317px;-webkit-text-stroke-width:0.2px;">Filter</span>
<span class="t" style="left:268.40px;top:273.23px;font-size:11.4px;color:#1f2937;letter-spacing:0.490px;-webkit-text-stroke-width:0.32px;">Actions</span>
<span class="t" style="left:358.75px;top:273.83px;font-size:11.4px;color:#1f2937;letter-spacing:0.134px;-webkit-text-stroke-width:0.32px;">Session ID</span>
<span class="t" style="left:454.40px;top:273.83px;font-size:11.4px;color:#1f2937;letter-spacing:0.350px;-webkit-text-stroke-width:0.32px;">Testing session name</span>
<span class="t" style="left:628.75px;top:273.13px;font-size:11.4px;color:#1f2937;letter-spacing:0.341px;-webkit-text-stroke-width:0.32px;">Status</span>
<span class="t" style="left:721.00px;top:273.23px;font-size:11.4px;color:#1f2937;letter-spacing:0.357px;-webkit-text-stroke-width:0.32px;">Availability status</span>
<span class="t" style="left:856.60px;top:273.23px;font-size:11.4px;color:#1f2937;letter-spacing:0.396px;-webkit-text-stroke-width:0.32px;">Testing session start time</span>
<span class="t" style="left:1045.00px;top:273.23px;font-size:11.4px;color:#1f2937;letter-spacing:0.372px;-webkit-text-stroke-width:0.32px;">Testing session end time</span>
<span class="t" style="left:1230.20px;top:273.13px;font-size:11.4px;color:#1f2937;letter-spacing:0.351px;-webkit-text-stroke-width:0.32px;">Candidates</span>
<span class="t" style="left:1345.30px;top:274.13px;font-size:11.4px;color:#1f2937;letter-spacing:0.327px;-webkit-text-stroke-width:0.32px;">User group</span>
<span class="t" style="left:1495.60px;top:274.13px;font-size:11.4px;color:#1f2937;letter-spacing:0.250px;-webkit-text-stroke-width:0.32px;">Training course</span>
<span class="t" style="left:381.00px;top:303.23px;font-size:11.4px;color:#7f8896;letter-spacing:0.141px;-webkit-text-stroke-width:0.12px;">Search</span>
<span class="t" style="left:477.80px;top:303.23px;font-size:11.4px;color:#7f8896;letter-spacing:0.221px;-webkit-text-stroke-width:0.12px;">Search</span>
<span class="t" style="left:623.75px;top:301.73px;font-size:11.4px;color:#7f8896;letter-spacing:0.197px;">Select one</span>
<span class="t" style="left:744.80px;top:301.73px;font-size:11.4px;color:#7f8896;letter-spacing:0.230px;">Select one</span>
<span class="t" style="left:1336.40px;top:303.33px;font-size:11.4px;color:#7f8896;letter-spacing:0.261px;-webkit-text-stroke-width:0.12px;">Search</span>
<span class="t" style="left:1498.60px;top:303.33px;font-size:11.4px;color:#7f8896;letter-spacing:0.141px;-webkit-text-stroke-width:0.12px;">Search</span>
<span class="t" style="left:379.65px;top:337.23px;font-size:11.4px;color:#6b7280;letter-spacing:0.353px;">14426</span>
<span class="t" style="left:456.00px;top:337.23px;font-size:11.4px;color:#1f6cec;letter-spacing:0.346px;-webkit-text-stroke-width:0.33px;">Operations - Testing S...</span>
<span class="t" style="left:638.75px;top:337.23px;font-size:11.4px;color:#2fbf4f;letter-spacing:0.414px;-webkit-text-stroke-width:0.2px;">Active</span>
<span class="t" style="left:740.00px;top:337.23px;font-size:11.4px;color:#2fbf4f;letter-spacing:0.276px;-webkit-text-stroke-width:0.2px;">Available now</span>
<span class="t" style="left:857.75px;top:337.23px;font-size:11.4px;color:#6b7280;letter-spacing:0.231px;">Oct-17-2023 09:18 AM CEST</span>
<span class="t" style="left:1047.30px;top:337.23px;font-size:11.4px;color:#6b7280;letter-spacing:0.280px;">Oct-31-2033 09:18 AM CET</span>
<span class="t" style="left:1286.46px;top:337.13px;font-size:11.4px;color:#1f6cec;-webkit-text-stroke-width:0.2px;">0</span>
<span class="t" style="left:1314.50px;top:337.13px;font-size:11.4px;color:#1f6cec;letter-spacing:0.331px;-webkit-text-stroke-width:0.33px;">Operations</span>
<span class="t" style="left:379.65px;top:376.23px;font-size:11.4px;color:#6b7280;letter-spacing:0.353px;">14427</span>
<span class="t" style="left:456.00px;top:376.23px;font-size:11.4px;color:#1f6cec;letter-spacing:0.224px;-webkit-text-stroke-width:0.33px;">Research and Develop...</span>
<span class="t" style="left:638.75px;top:376.23px;font-size:11.4px;color:#2fbf4f;letter-spacing:0.414px;-webkit-text-stroke-width:0.2px;">Active</span>
<span class="t" style="left:740.00px;top:376.23px;font-size:11.4px;color:#2fbf4f;letter-spacing:0.276px;-webkit-text-stroke-width:0.2px;">Available now</span>
<span class="t" style="left:857.75px;top:376.23px;font-size:11.4px;color:#6b7280;letter-spacing:0.231px;">Oct-17-2023 09:18 AM CEST</span>
<span class="t" style="left:1047.30px;top:376.23px;font-size:11.4px;color:#6b7280;letter-spacing:0.280px;">Oct-31-2033 09:18 AM CET</span>
<span class="t" style="left:1286.46px;top:376.13px;font-size:11.4px;color:#1f6cec;-webkit-text-stroke-width:0.2px;">1</span>
<span class="t" style="left:1314.50px;top:376.13px;font-size:11.4px;color:#1f6cec;letter-spacing:0.242px;-webkit-text-stroke-width:0.33px;">Research and Develop...</span>
<span class="t" style="left:379.65px;top:415.33px;font-size:11.4px;color:#6b7280;letter-spacing:0.353px;">14425</span>
<span class="t" style="left:456.00px;top:415.33px;font-size:11.4px;color:#1f6cec;letter-spacing:0.285px;-webkit-text-stroke-width:0.33px;">Marketing and Sales - ...</span>
<span class="t" style="left:638.75px;top:415.33px;font-size:11.4px;color:#2fbf4f;letter-spacing:0.414px;-webkit-text-stroke-width:0.2px;">Active</span>
<span class="t" style="left:740.00px;top:415.33px;font-size:11.4px;color:#2fbf4f;letter-spacing:0.276px;-webkit-text-stroke-width:0.2px;">Available now</span>
<span class="t" style="left:857.95px;top:415.33px;font-size:11.4px;color:#6b7280;letter-spacing:0.214px;">Oct-17-2023 09:17 AM CEST</span>
<span class="t" style="left:1047.50px;top:415.33px;font-size:11.4px;color:#6b7280;letter-spacing:0.262px;">Oct-31-2033 09:17 AM CET</span>
<span class="t" style="left:1286.46px;top:415.23px;font-size:11.4px;color:#1f6cec;-webkit-text-stroke-width:0.2px;">0</span>
<span class="t" style="left:1314.50px;top:415.23px;font-size:11.4px;color:#1f6cec;letter-spacing:0.325px;-webkit-text-stroke-width:0.33px;">Marketing and Sales</span>
<span class="t" style="left:379.65px;top:454.13px;font-size:11.4px;color:#6b7280;letter-spacing:0.353px;">14420</span>
<span class="t" style="left:456.00px;top:454.13px;font-size:11.4px;color:#1f6cec;letter-spacing:0.458px;-webkit-text-stroke-width:0.33px;">Cybersecurity Testing...</span>
<span class="t" style="left:638.75px;top:454.13px;font-size:11.4px;color:#2fbf4f;letter-spacing:0.414px;-webkit-text-stroke-width:0.2px;">Active</span>
<span class="t" style="left:740.00px;top:454.13px;font-size:11.4px;color:#2fbf4f;letter-spacing:0.276px;-webkit-text-stroke-width:0.2px;">Available now</span>
<span class="t" style="left:856.25px;top:454.13px;font-size:11.4px;color:#6b7280;letter-spacing:0.224px;">Sep-22-2023 01:57 PM CEST</span>
<span class="t" style="left:1042.15px;top:454.13px;font-size:11.4px;color:#6b7280;letter-spacing:0.249px;">Sep-30-2033 01:57 PM CEST</span>
<span class="t" style="left:1286.46px;top:454.03px;font-size:11.4px;color:#1f6cec;-webkit-text-stroke-width:0.2px;">1</span>
<span class="t" style="left:257.20px;top:499.36px;font-size:9.9px;color:#4b5563;letter-spacing:0.256px;-webkit-text-stroke-width:0.15px;">Save displayed columns set</span>
<span class="t" style="left:894.52px;top:498.44px;font-size:11.8px;color:#ffffff;font-weight:bold;">1</span>
<span class="t" style="left:985.60px;top:498.63px;font-size:11.4px;color:#1f2937;letter-spacing:-1.272px;">10</span>
<span class="t" style="left:1533.00px;top:499.46px;font-size:9.9px;color:#374151;letter-spacing:0.055px;">Rows: 4</span>
</div>
</body></html>
